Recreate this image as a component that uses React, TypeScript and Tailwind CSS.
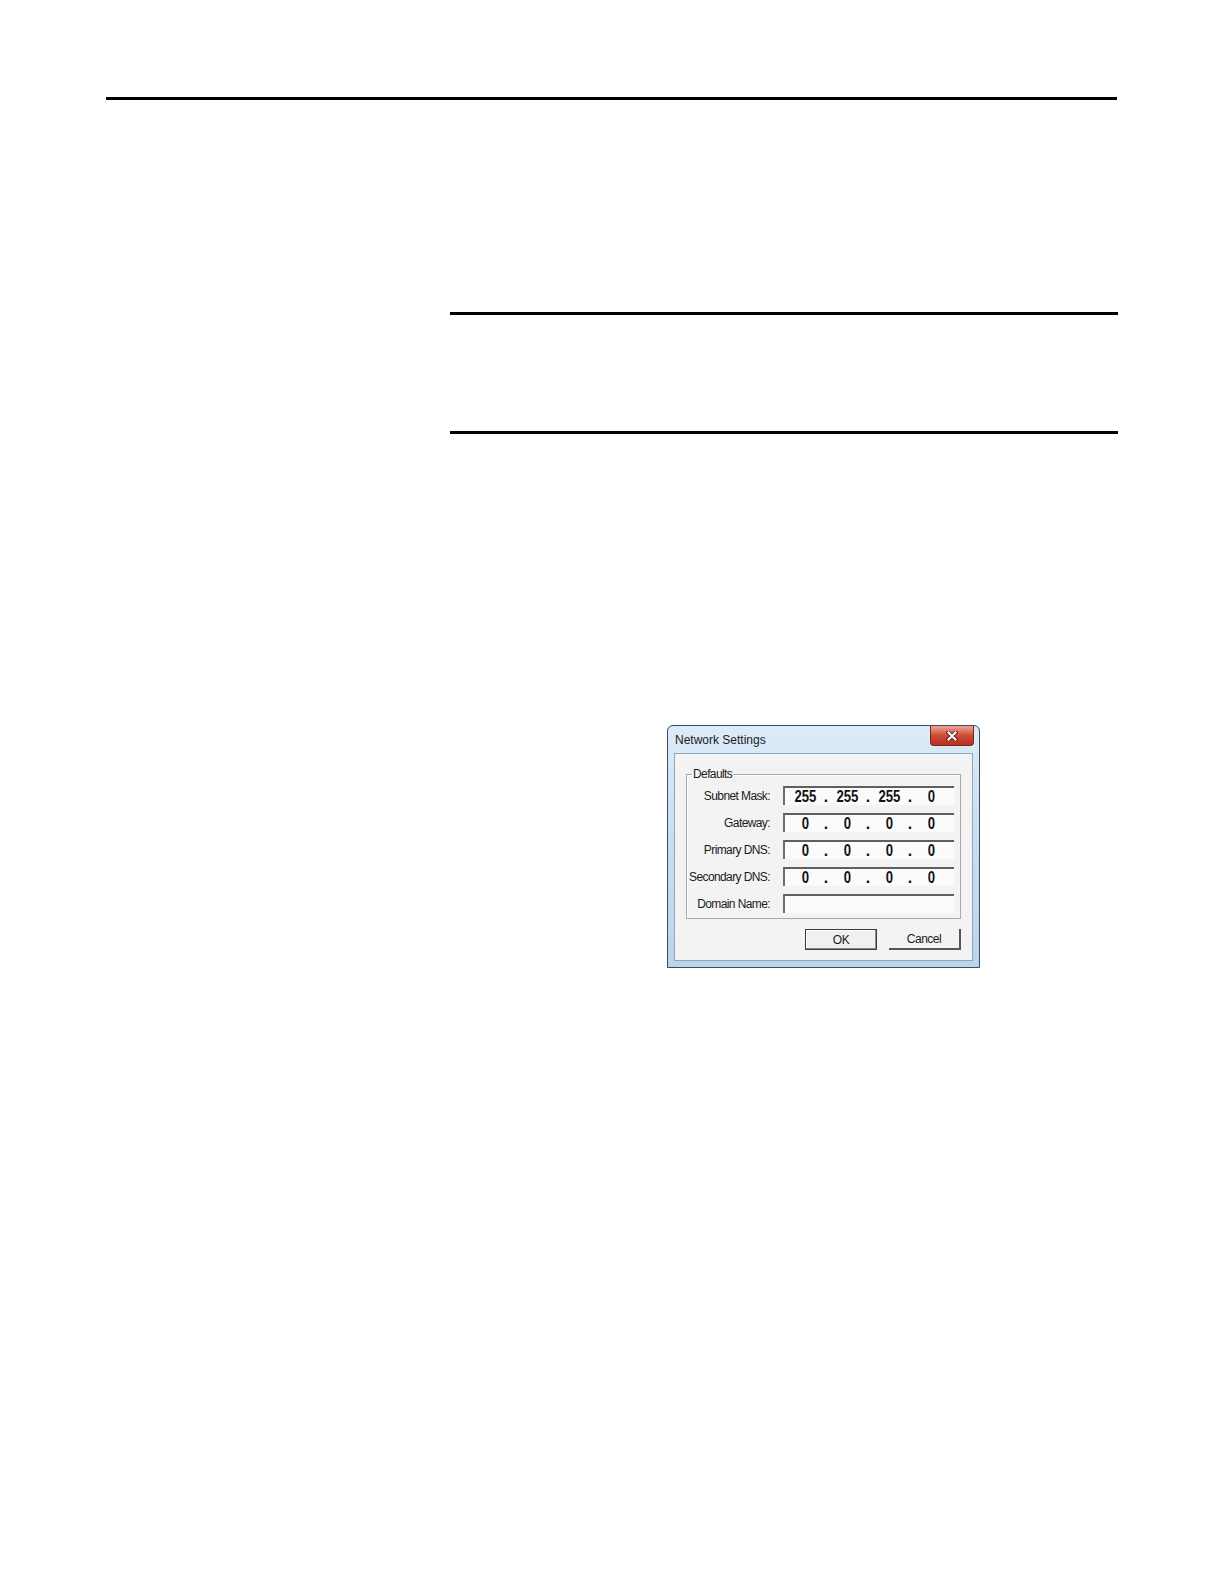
import React from 'react';

const font = { fontFamily: '"Liberation Sans", Arial, sans-serif' };

function Octet({ value }: { value: string }) {
  return (
    <span className="flex w-[30px] justify-center">
      <span className="inline-block scale-x-[0.82]">{value}</span>
    </span>
  );
}

function Dot() {
  return <span className="w-[12px] text-center">.</span>;
}

function IpField({ octets }: { octets?: string[] }) {
  return (
    <div className="flex h-[19px] w-[171px] items-center border-l-2 border-t-2 border-l-[#6d6d6d] border-t-[#5f5f5f] bg-[#fbfbfb]">
      {octets && (
        <div className="flex items-center pl-[5px] text-[16px] font-bold leading-none text-[#111]">
          <Octet value={octets[0]} />
          <Dot />
          <Octet value={octets[1]} />
          <Dot />
          <Octet value={octets[2]} />
          <Dot />
          <Octet value={octets[3]} />
        </div>
      )}
    </div>
  );
}

function Row({ label, octets }: { label: string; octets?: string[] }) {
  return (
    <div className="flex items-center">
      <span className="w-[83px] text-right text-[12px] tracking-[-0.6px] text-[#1a1a1a]">{label}</span>
      <div className="ml-[13px]">
        <IpField octets={octets} />
      </div>
    </div>
  );
}

function NetworkSettingsDialog() {
  const zeros = ['0', '0', '0', '0'];
  return (
    <div className="relative flex h-[243px] w-[313px] flex-col rounded-t-[6px] border border-[#3f4c59] bg-gradient-to-b from-[#dcebf8] via-[#c7ddf1] to-[#bcd4eb]" style={font}>
      <div className="flex h-[27px] items-center pl-[7px] text-[12px] text-[#1b1b1b]">Network Settings</div>
      <button className="absolute right-[5px] top-0 flex h-[20px] w-[44px] items-center justify-center rounded-b-[4px] border border-t-0 border-[#7b2418] bg-gradient-to-b from-[#e9a595] via-[#cf4a36] to-[#b8311f]">
        <svg width="12" height="10" viewBox="0 0 12 10">
          <path d="M2.5 1.5 L9.5 8.5 M9.5 1.5 L2.5 8.5" stroke="#3a0d08" strokeWidth="3.8" strokeLinecap="square" />
          <path d="M2.5 1.5 L9.5 8.5 M9.5 1.5 L2.5 8.5" stroke="#ffffff" strokeWidth="2.2" strokeLinecap="square" />
        </svg>
      </button>
      <div className="mx-[6px] mb-[6px] flex flex-1 flex-col border border-[#8fa6bb] bg-[#f3f3f3] px-[11px] pt-[11px]">
        <fieldset className="border border-[#a9a9a9] px-0 pb-[5px] pt-[3px] shadow-[inset_1px_1px_0_#ffffff]">
          <legend className="ml-[5px] px-[1px] text-[12px] tracking-[-0.6px] text-[#1a1a1a]">Defaults</legend>
          <div className="flex flex-col gap-[8px]">
            <Row label="Subnet Mask:" octets={['255', '255', '255', '0']} />
            <Row label="Gateway:" octets={zeros} />
            <Row label="Primary DNS:" octets={zeros} />
            <Row label="Secondary DNS:" octets={zeros} />
            <Row label="Domain Name:" />
          </div>
        </fieldset>
        <div className="mt-[10px] flex justify-end gap-[12px]">
          <button className="h-[21px] w-[72px] border border-[#3c3c3c] bg-[#f0f0f0] text-[12px] tracking-[-0.5px] text-[#1a1a1a] shadow-[inset_-1px_-1px_0_#8a8a8a,inset_1px_1px_0_#ffffff]">OK</button>
          <button className="h-[21px] w-[72px] border-b-2 border-r-2 border-b-[#555] border-r-[#555] bg-[#f3f3f3] text-[12px] tracking-[-0.5px] text-[#1a1a1a]">Cancel</button>
        </div>
      </div>
    </div>
  );
}

export default function App() {
  return (
    <div className="relative h-[1584px] w-[1224px] bg-white" style={font}>
      <div className="pt-[97px]">
        <div className="ml-[106px] h-[3px] w-[1011px] bg-black" />
        <div className="ml-[450px] mt-[212px] h-[3px] w-[668px] bg-black" />
        <div className="ml-[450px] mt-[116px] h-[3px] w-[668px] bg-black" />
        <div className="ml-[667px] mt-[291px]">
          <NetworkSettingsDialog />
        </div>
      </div>
    </div>
  );
}
